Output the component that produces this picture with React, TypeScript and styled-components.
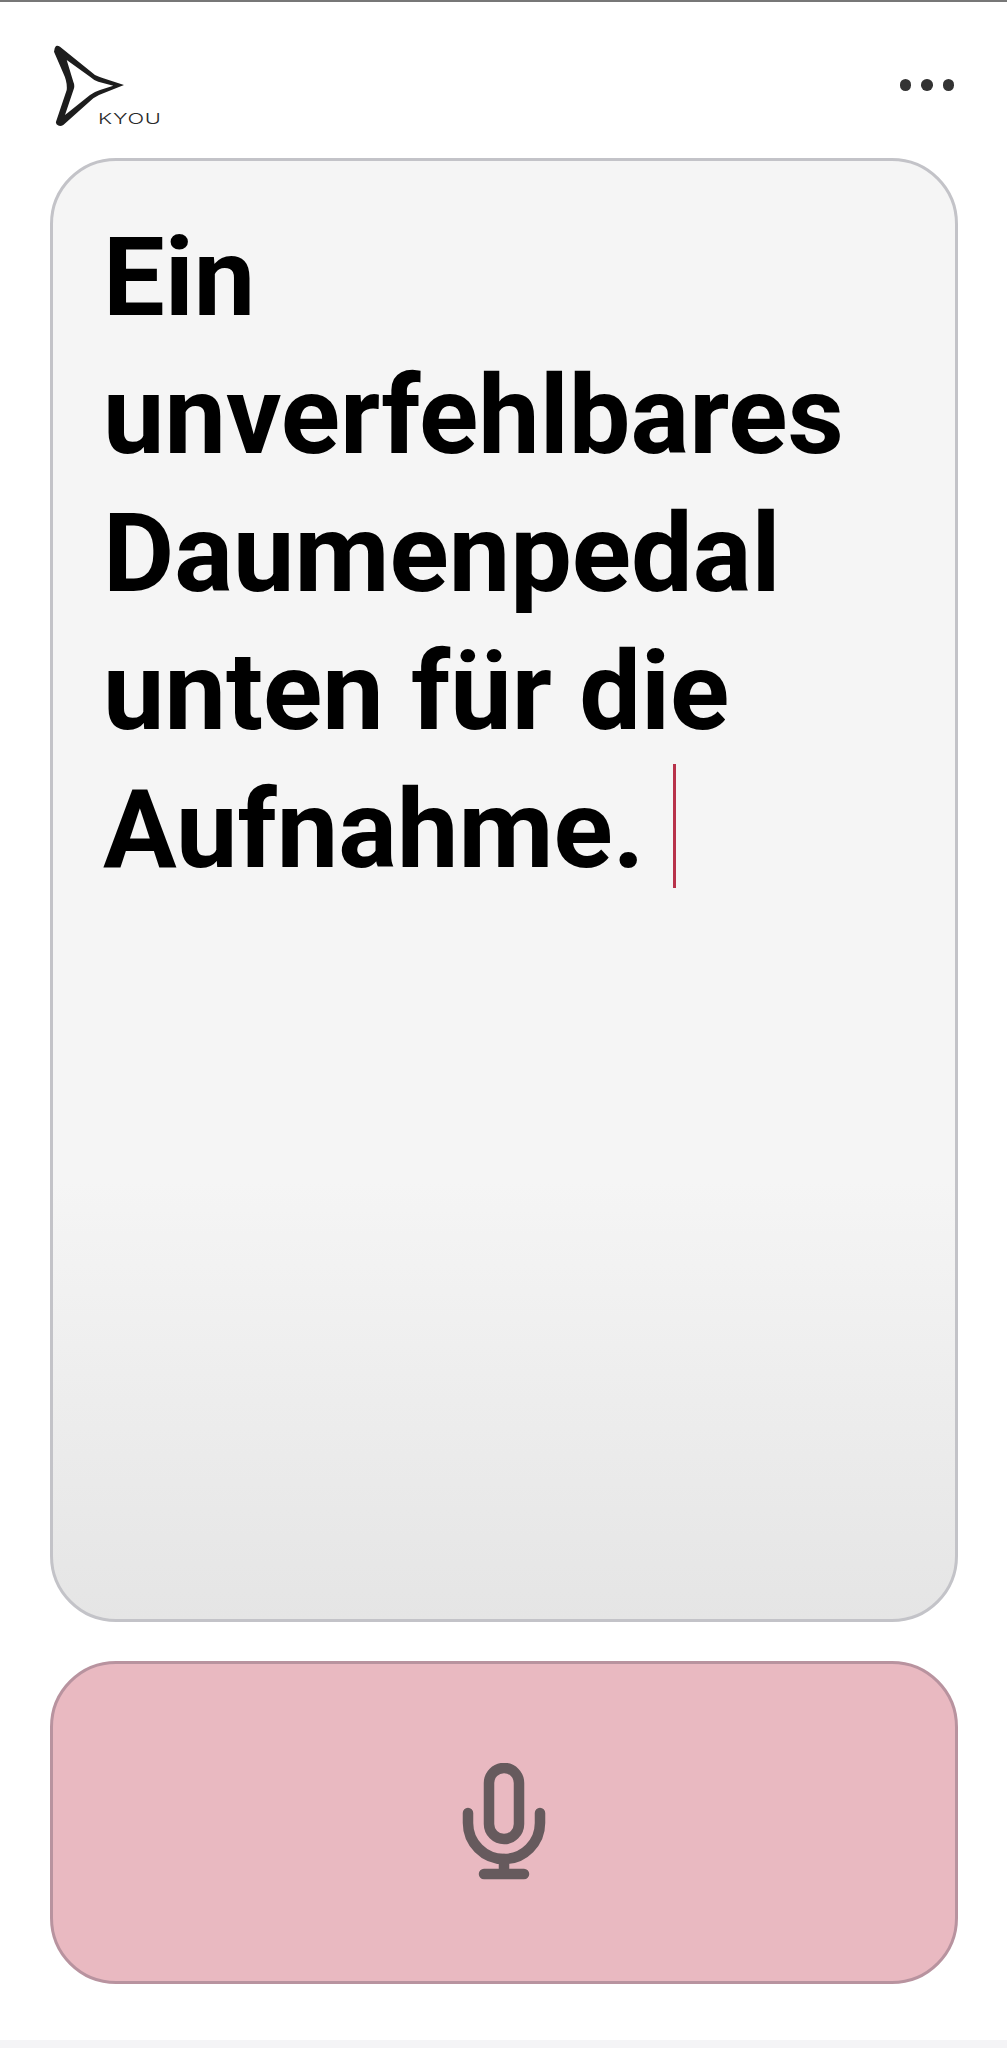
import React from "react";
import styled, { createGlobalStyle } from "styled-components";

const Global = createGlobalStyle`
  html, body { margin: 0; padding: 0; background: #ffffff; }
  #root { width: 1007px; height: 2048px; overflow: hidden; }
`;

const Page = styled.main`
  box-sizing: border-box;
  width: 1007px;
  height: 2048px;
  display: flex;
  flex-direction: column;
  background: #ffffff;
  border-top: 2px solid #777777;
  font-family: Roboto, "Liberation Sans", sans-serif;
`;

const Header = styled.header`
  height: 156px;
  flex: none;
  box-sizing: border-box;
  padding: 40px 53px 0 54px;
  display: flex;
  justify-content: space-between;
  align-items: flex-start;
`;

const Brand = styled.div`
  display: flex;
  align-items: flex-end;
`;

const BrandName = styled.span`
  font-family: Inter, "Liberation Sans", sans-serif;
  font-weight: 300;
  font-size: 15px;
  line-height: 14px;
  letter-spacing: 0.5px;
  color: #2a2a2a;
  margin-left: -28px;
  transform: scaleX(1.46);
  transform-origin: left center;
`;

const MoreButton = styled.button`
  display: flex;
  gap: 10px;
  padding: 0;
  margin-top: 37px;
  border: 0;
  background: none;
`;

const Dot = styled.span`
  width: 11.5px;
  height: 11.5px;
  border-radius: 50%;
  background: #333333;
`;

const Content = styled.div`
  flex: none;
  display: flex;
  flex-direction: column;
  gap: 39px;
  padding: 0 49px 0 50px;
`;

const Editor = styled.section`
  box-sizing: border-box;
  height: 1464px;
  border: 3px solid #c3c3c8;
  border-radius: 66px;
  padding: 48px 40px 0 50px;
  background: linear-gradient(180deg, #f5f5f5 0%, #f5f5f5 70%, #e5e5e5 100%);
`;

const Sentence = styled.p`
  margin: 0;
  font-size: 109.7px;
  line-height: 138px;
  font-weight: 700;
  color: #000000;
`;

const Caret = styled.span`
  display: inline-block;
  width: 3px;
  height: 124px;
  margin-left: 29px;
  vertical-align: -21px;
  background: #b8324a;
`;

const RecordButton = styled.button`
  box-sizing: border-box;
  height: 323px;
  padding: 6px 0 0;
  border: 3px solid #b8939f;
  border-radius: 66px;
  background: #e9b9c1;
  display: flex;
  align-items: center;
  justify-content: center;
`;

const Footer = styled.div`
  margin-top: auto;
  height: 8px;
  background: #f4f4f6;
`;

export default function App() {
  return (
    <Page>
      <Global />
      <Header>
        <Brand>
          <svg width="72" height="84" viewBox="0 0 72 84" aria-hidden="true">
            <path
              fillRule="evenodd"
              fill="#1d1d1d"
              d="M2 4 Q4 3.5 6 4.7 L41 33 Q45 35 49.3 36.3 L70 43 L49.3 51.3 Q44 53 39.3 56.3 L9.3 83 Q6.5 84.5 4.3 83.5 Q1.5 82 2 79.7 L12.7 48 Q13.5 40 9.3 31.3 L0 9.7 Q0 6 2 4 Z
                 M12.7 18 L19.3 39.7 Q20.8 43 20 46.3 L11 73 L36 53 Q41 49.5 46 48 L59.3 43.7 L44.3 39.7 Q39.5 38 36 34.7 Z"
            />
          </svg>
          <BrandName>KYOU</BrandName>
        </Brand>
        <MoreButton aria-label="Mehr">
          <Dot />
          <Dot />
          <Dot />
        </MoreButton>
      </Header>
      <Content>
        <Editor>
          <Sentence>
            Ein unverfehlbares Daumenpedal unten für die Aufnahme.
            <Caret />
          </Sentence>
        </Editor>
        <RecordButton aria-label="Aufnahme">
          <svg width="92" height="126" viewBox="0 0 92 126" aria-hidden="true" fill="none" stroke="#665a5d" strokeWidth="10.5" strokeLinecap="round">
            <rect x="31" y="5" width="30" height="71" rx="15" />
            <path d="M10 50 V60 A36 36 0 0 0 82 60 V50" />
            <path d="M46 96 V111 M26 111 H66" />
          </svg>
        </RecordButton>
      </Content>
      <Footer />
    </Page>
  );
}
